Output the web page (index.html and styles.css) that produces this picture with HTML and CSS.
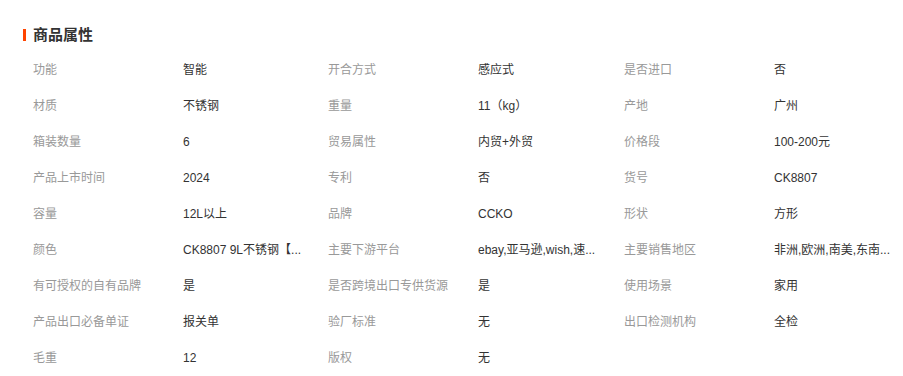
FILE: index.html
```html
<!DOCTYPE html>
<html lang="zh-CN">
<head>
<meta charset="utf-8">
<title>商品属性</title>
<link rel="stylesheet" href="styles.css">
</head>
<body>
<section class="attrs">
  <h2 class="attrs-title">商品属性</h2>
  <div class="attrs-grid">
    <div class="k">功能</div><div class="v">智能</div>
    <div class="k">开合方式</div><div class="v">感应式</div>
    <div class="k">是否进口</div><div class="v">否</div>

    <div class="k">材质</div><div class="v">不锈钢</div>
    <div class="k">重量</div><div class="v">11（kg）</div>
    <div class="k">产地</div><div class="v">广州</div>

    <div class="k">箱装数量</div><div class="v">6</div>
    <div class="k">贸易属性</div><div class="v">内贸+外贸</div>
    <div class="k">价格段</div><div class="v">100-200元</div>

    <div class="k">产品上市时间</div><div class="v">2024</div>
    <div class="k">专利</div><div class="v">否</div>
    <div class="k">货号</div><div class="v">CK8807</div>

    <div class="k">容量</div><div class="v">12L以上</div>
    <div class="k">品牌</div><div class="v">CCKO</div>
    <div class="k">形状</div><div class="v">方形</div>

    <div class="k">颜色</div><div class="v" title="CK8807 9L不锈钢【感应款】">CK8807 9L不锈钢【...</div>
    <div class="k">主要下游平台</div><div class="v" title="ebay,亚马逊,wish,速卖通">ebay,亚马逊,wish,速...</div>
    <div class="k">主要销售地区</div><div class="v" title="非洲,欧洲,南美,东南亚">非洲,欧洲,南美,东南...</div>

    <div class="k">有可授权的自有品牌</div><div class="v">是</div>
    <div class="k">是否跨境出口专供货源</div><div class="v">是</div>
    <div class="k">使用场景</div><div class="v">家用</div>

    <div class="k">产品出口必备单证</div><div class="v">报关单</div>
    <div class="k">验厂标准</div><div class="v">无</div>
    <div class="k">出口检测机构</div><div class="v">全检</div>

    <div class="k">毛重</div><div class="v">12</div>
    <div class="k">版权</div><div class="v">无</div>
  </div>
</section>
</body>
</html>
```

FILE: styles.css
```css
html, body {
  margin: 0;
  padding: 0;
  background: #fff;
}

body {
  font-family: "Liberation Sans", "Noto Sans CJK SC", sans-serif;
  font-size: 12px;
  color: #333;
}

.attrs {
  padding: 25px 0 0 23px;
}

.attrs-title {
  margin: 0;
  height: 20px;
  line-height: 20px;
  font-size: 15px;
  font-weight: bold;
  color: #333;
  display: flex;
  align-items: center;
  gap: 7px;
}

.attrs-title::before {
  content: "";
  width: 3px;
  height: 12px;
  background: #ff4400;
  margin-top: -1px;
}

.attrs-grid {
  margin-top: 7px;
  margin-left: 10px;
  display: grid;
  grid-template-columns: 150px 145px 150px 146px 150px 129px;
  grid-auto-rows: 36px;
}

.k,
.v {
  line-height: 36px;
  white-space: nowrap;
}

.k {
  color: #999;
}

.v {
  color: #333;
}
```
